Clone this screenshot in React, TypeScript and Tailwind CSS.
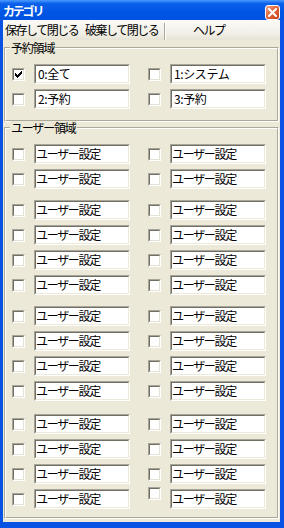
import React from 'react';

type Item = { text: string; checked?: boolean; lift?: boolean };

const reserved: Item[][] = [
  [{ text: '0:全て', checked: true }, { text: '1:システム' }],
  [{ text: '2:予約' }, { text: '3:予約' }],
];

const user = 'ユーザー設定';
// groups of rows with the extra gap above each group
const userGroups: { gap: string; rows: number }[] = [
  { gap: 'mt-0', rows: 2 },
  { gap: 'mt-[11px]', rows: 4 },
  { gap: 'mt-[11px]', rows: 4 },
  { gap: 'mt-[13px]', rows: 4 },
];

function CheckBox({ checked, className = '' }: { checked?: boolean; className?: string }) {
  return (
    <span
      className={`flex h-[13px] w-[13px] shrink-0 border border-t-[#a7a49a] border-l-[#a7a49a] border-b-white border-r-white ${className}`}
    >
      <span className="flex flex-1 items-center justify-center border border-t-[#716f64] border-l-[#716f64] border-b-[#e4e2d6] border-r-[#e4e2d6] bg-white">
        {checked && (
          <svg width="7" height="7" viewBox="0 0 7 7" shapeRendering="crispEdges">
            <path d="M0 2h1v1h1v1h1v-1h1v-1h1v-1h1v-1h1v3h-1v1h-1v1h-1v1h-1v1h-1v-1h-1v-1h-1z" fill="#000" />
          </svg>
        )}
      </span>
    </span>
  );
}

function Field({ text, pad = 'pl-0 tracking-[-1.3px]' }: { text: string; pad?: string }) {
  return (
    <div className="flex h-[20px] w-[96px] shrink-0 border border-t-[#a7a49a] border-l-[#a7a49a] border-b-white border-r-white">
      <div
        className={`flex flex-1 items-center overflow-hidden whitespace-nowrap border border-t-[#716f64] border-l-[#716f64] border-b-[#ece9d8] border-r-[#ece9d8] bg-white text-[12px] leading-none text-black ${pad}`}
      >
        {text}
      </div>
    </div>
  );
}

function Row({ items, pad }: { items: Item[]; pad?: string }) {
  return (
    <div className="flex h-[20px] items-center pl-[6px]">
      <CheckBox checked={items[0].checked} />
      <div className="ml-[9px]">
        <Field text={items[0].text} pad={pad} />
      </div>
      <CheckBox checked={items[1].checked} className={items[1].lift ? 'ml-[18px] -mt-[2px] self-start' : 'ml-[18px]'} />
      <div className="ml-[9px]">
        <Field text={items[1].text} pad={pad} />
      </div>
    </div>
  );
}

function Group({ label, className = '', children }: { label: string; className?: string; children: React.ReactNode }) {
  return (
    <div className={`relative mx-[1px] flex border border-t-[#aca899] border-l-[#aca899] border-b-white border-r-white ${className}`}>
      <div className="flex flex-1 flex-col border border-t-white border-l-white border-b-[#aca899] border-r-[#aca899] pt-[15px]">
        {children}
      </div>
      <span className="absolute -top-[7px] left-[5px] bg-[#ece9d8] px-[1px] text-[12px] leading-[14px] tracking-[-1.2px] text-black">
        {label}
      </span>
    </div>
  );
}

export default function App() {
  return (
    <div className="flex h-[528px] w-[284px] flex-col bg-[#0a52e4] font-['Noto_Sans_CJK_JP',sans-serif]">
      {/* title bar */}
      <div className="flex h-[20px] shrink-0 items-start justify-between bg-[linear-gradient(180deg,#4c9bff_0%,#0a60ea_18%,#0055e5_60%,#0052e0_100%)] pl-[3px] pr-[4px]">
        <span className="mt-[4px] text-[12px] font-bold leading-[13px] tracking-[-2.2px] text-white">
          カテゴリ
        </span>
        <div className="mt-[5px] flex h-[15px] w-[15px] items-center justify-center rounded-[3px] border border-white bg-[linear-gradient(135deg,#f3a487_0%,#e4673f_45%,#c8401b_100%)]">
          <svg width="9" height="9" viewBox="0 0 9 9">
            <path d="M1 1L8 8M8 1L1 8" stroke="#fff" strokeWidth="2" strokeLinecap="square" />
          </svg>
        </div>
      </div>

      <div className="flex flex-1 flex-col border-b-[6px] border-l-[3px] border-r-[4px] border-[#0a52e4] bg-[#ece9d8]">
        {/* menu bar */}
        <div className="flex h-[20px] shrink-0 items-center bg-[linear-gradient(180deg,#fbfaf6_0%,#f1efe6_70%,#e6e3d4_100%)] text-[12px] leading-none tracking-[-1.5px] text-black">
          <span className="w-[80px] whitespace-nowrap pl-[2px]">保存して閉じる</span>
          <span className="w-[81px] whitespace-nowrap pl-[2px]">破棄して閉じる</span>
          <span className="h-[17px] w-[2px] self-end border-l border-r border-l-[#aca899] border-r-white" />
          <span className="ml-[27px] whitespace-nowrap">ヘルプ</span>
        </div>

        <Group label="予約領域" className="mt-[7px] h-[75px]">
          <div className="flex flex-col gap-[5px]">
            {reserved.map((r, i) => (
              <Row key={i} items={r} pad="pl-[2px] tracking-[-0.4px]" />
            ))}
          </div>
        </Group>

        <Group label="ユーザー領域" className="mt-[5px] h-[392px]">
          {userGroups.map((g, gi) => (
            <div key={gi} className={`flex flex-col gap-[5px] ${g.gap}`}>
              {Array.from({ length: g.rows }).map((_, ri) => {
                const last = gi === userGroups.length - 1 && ri === g.rows - 1;
                return <Row key={ri} items={[{ text: user }, { text: user, lift: last }]} />;
              })}
            </div>
          ))}
        </Group>
      </div>
    </div>
  );
}
